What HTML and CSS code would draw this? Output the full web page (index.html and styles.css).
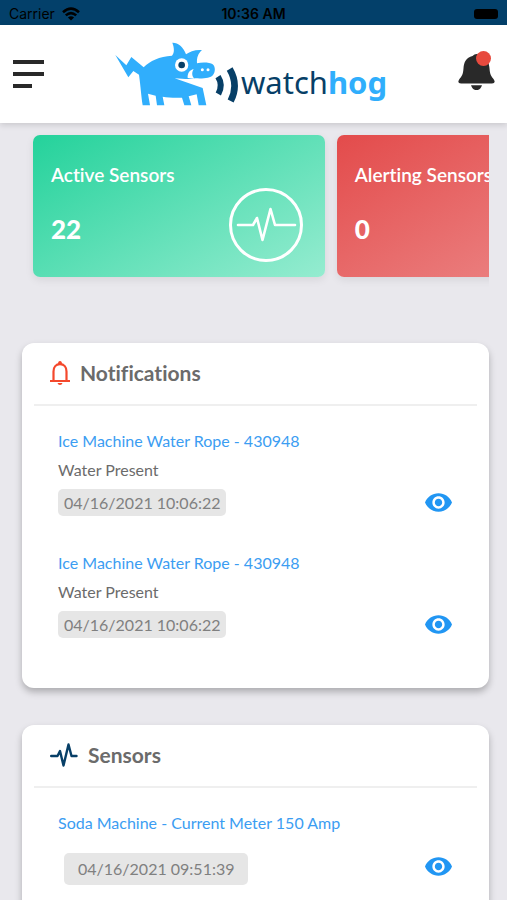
FILE: index.html
```html
<!DOCTYPE html>
<html lang="en">
<head>
<meta charset="utf-8">
<meta name="viewport" content="width=device-width, initial-scale=1">
<title>watchhog</title>
<link rel="stylesheet" href="styles.css">
</head>
<body>
<svg class="defs" aria-hidden="true">
  <symbol id="eye" viewBox="1 4.5 22 15"><path d="M12 4.500C7 4.500 2.730 7.610 1 12c1.730 4.390 6 7.500 11 7.500s9.270-3.110 11-7.500c-1.730-4.390-6-7.500-11-7.500zM12 17c-2.760 0-5-2.240-5-5s2.240-5 5-5 5 2.240 5 5-2.240 5-5 5zm0-8c-1.660 0-3 1.340-3 3s1.340 3 3 3 3-1.340 3-3-1.340-3-3-3z"/></symbol>
</svg>
<div class="status">
  <span class="carrier">Carrier
    <svg width="18" height="14" viewBox="0 0 18 14" aria-hidden="true"><g fill="none" stroke="#000" stroke-width="2.600"><path d="M1 5.200Q9-2 17 5.200"/><path d="M3.800 8.400Q9 3.800 14.200 8.400"/></g><path d="M5.900 10.400Q9 7.900 12.100 10.400L9 13.600Z"/></svg>
  </span>
  <span class="time">10:36 AM</span>
  <span class="battery"></span>
</div>
<header class="topbar">
  <button class="icon-btn" aria-label="Menu">
    <svg width="31" height="30" viewBox="0 0 31 30"><path fill="#292929" d="M0 1h31v4H0zM0 13h31v4H0zM0 25h19v4H0z"/></svg>
  </button>
  <a class="logo" href="#" aria-label="watchhog">
    <svg width="124" height="64" viewBox="19 20 372 192" aria-hidden="true">
      <path fill="#30aefc" d="M20 59L53 90L68 65L105 96C124 76 152 64 190 61C198 52 197 38 191 22C207 21 224 34 232 57C243 49 260 42 280 44C269 54 264 66 265 84C280 80 304 81 312 87C321 94 320 111 313 119C305 129 284 130 260 129C245 133 226 131 198 129L282 158L293 210H270L264 177L240 183L248 210H227L220 187C198 188 178 187 162 184L167 210H145L141 181L118 175L124 210H102C98 184 96 155 91 118L74 107L59 126Z"/>
      <path fill="#fff" d="M237 128C236 114 243 104 255 101C249 111 249 122 257 130Z"/>
      <circle cx="219" cy="89" r="20" fill="#fff"/><circle cx="219" cy="89" r="10" fill="#073f67"/>
      <circle cx="281" cy="103" r="4.500" fill="#fff"/><circle cx="298" cy="103" r="4.500" fill="#fff"/>
      <g fill="none" stroke="#073f67"><path stroke-width="18" d="M328 124Q344 149 329 176"/><path stroke-width="20" d="M363 101Q391 149 366 197"/></g>
    </svg>
    <span class="wordmark">watch<b>hog</b></span>
  </a>
  <button class="icon-btn alerts" aria-label="Alerts">
    <svg width="37" height="36" viewBox="0 0 37 36"><path fill="#292929" d="M14.500 2Q18.500-2 22.500 2C29 4 31 8 31.500 15C32 22 33 23 36 27Q38 31 34 31H3Q-1 31 1 27C4 23 5 22 5.500 15C6 8 8 4 14.500 2ZM13 33H24Q22.500 38 18.500 38T13 33Z" transform="scale(1 .95)"/></svg>
    <span class="dot"></span>
  </button>
</header>
<main>
  <section class="tiles" aria-label="Summary">
    <article class="tile green">
      <h2>Active Sensors</h2>
      <strong>22</strong>
      <svg class="pulse" width="74" height="74" viewBox="0 0 74 74" aria-hidden="true"><g fill="none" stroke="#fff" stroke-width="3" stroke-linecap="round" stroke-linejoin="round"><circle cx="37" cy="37" r="35.500"/><path stroke-width="2.600" d="M9 37H24L28 30L33.500 52L41.500 21L46 37H66"/></g></svg>
    </article>
    <article class="tile red">
      <h2>Alerting Sensors</h2>
      <strong>0</strong>
    </article>
  </section>
  <section class="panel">
    <h2 class="panel-head">
      <svg width="20" height="24" viewBox="0 0 20 24" aria-hidden="true"><path fill="none" stroke="#f4482c" stroke-width="2.200" d="M0 20H20M3.500 20V10.500C3.500 6 6 3.200 10 3.200S16.500 6 16.500 10.500V20"/><path fill="#f4482c" d="M8 3Q8 0 10 0T12 3ZM7.500 22H12.500Q12 24 10 24T7.500 22Z"/></svg>
      Notifications
    </h2>
    <ul>
      <li>
        <a href="#">Ice Machine Water Rope - 430948</a>
        <p>Water Present</p>
        <div class="meta"><time>04/16/2021 10:06:22</time><button class="icon-btn" aria-label="View"><svg width="27" height="19"><use href="#eye"/></svg></button></div>
      </li>
      <li>
        <a href="#">Ice Machine Water Rope - 430948</a>
        <p>Water Present</p>
        <div class="meta"><time>04/16/2021 10:06:22</time><button class="icon-btn" aria-label="View"><svg width="27" height="19"><use href="#eye"/></svg></button></div>
      </li>
    </ul>
  </section>
  <section class="panel sensors">
    <h2 class="panel-head">
      <svg width="28" height="24" viewBox="0 0 28 24" aria-hidden="true"><path fill="none" stroke="#073f67" stroke-width="2.400" stroke-linecap="round" stroke-linejoin="round" d="M1.200 13H7.500L10 8L13.500 22.500L18.500 1.500L21.500 13H26.500"/></svg>
      Sensors
    </h2>
    <ul>
      <li>
        <a href="#">Soda Machine - Current Meter 150 Amp</a>
        <div class="meta"><time>04/16/2021 09:51:39</time><button class="icon-btn" aria-label="View"><svg width="27" height="19"><use href="#eye"/></svg></button></div>
      </li>
    </ul>
  </section>
</main>
</body>
</html>
```
FILE: styles.css
```css
* { box-sizing: border-box; margin: 0; padding: 0; }
body {
  display: flex;
  flex-direction: column;
  height: 100vh;
  background: #e9e8ed;
  color: #6b6b6b;
  font-family: Lato, "Open Sans", sans-serif;
  font-size: 16px;
  font-variant-ligatures: none;
}
a { text-decoration: none; }
ul { list-style: none; }
svg { display: block; flex: none; }
.defs { position: absolute; width: 0; height: 0; }
.icon-btn { border: 0; background: none; cursor: pointer; }

.status {
  display: grid;
  grid-template-columns: 1fr auto 1fr;
  align-items: center;
  flex: none;
  height: 25px;
  padding: 2px 9px 0;
  background: #03406a;
  color: #000;
  font: 14px/20px Inter, sans-serif;
}
.carrier { display: flex; align-items: center; gap: 7px; }
.time { font-weight: 600; }
.battery { justify-self: end; width: 24px; height: 10px; border-radius: 3px; background: #000; }

.topbar {
  display: flex;
  align-items: center;
  flex: none;
  height: 98px;
  padding: 0 12px 0 13px;
  background: #fff;
  box-shadow: 0 2px 6px rgba(0, 0, 0, .14);
  position: relative;
}
.logo { display: flex; flex: 1; justify-content: center; align-items: center; gap: 2px; }
.wordmark { padding-top: 16px; color: #073f67; font: 31px/40px "Noto Sans", sans-serif; }
.wordmark b { color: #30aefc; font-weight: 700; }
.alerts { position: relative; padding-bottom: 4px; }
.dot {
  position: absolute;
  top: -3px;
  right: 4px;
  width: 15px;
  height: 15px;
  border-radius: 50%;
  background: #e74a3e;
}

main { flex: 1; min-height: 0; padding: 0 18px 0 22px; overflow: hidden auto; scrollbar-width: none; }
.tiles {
  display: flex;
  gap: 12px;
  height: 220px;
  padding: 12px 0 66px 11px;
  overflow: hidden;
}
.tile {
  position: relative;
  flex: none;
  width: 64%;
  padding: 28px 18px;
  border-radius: 7px;
  box-shadow: 0 3px 8px rgba(0, 0, 0, .08);
  color: #fff;
}
.green { background: linear-gradient(150deg, #24d29b, #95ecd0); }
.red { background: linear-gradient(150deg, #e34b4b, #ed8e8e); }
.tile h2 { font-size: 19px; font-weight: 600; line-height: 24px; white-space: nowrap; }
.tile strong { display: block; margin-top: 26px; font-size: 26px; font-weight: 900; line-height: 32px; }
.pulse { position: absolute; right: 22px; bottom: 15px; }

.panel {
  min-height: 345px;
  margin-bottom: 37px;
  padding: 0 12px;
  border-radius: 12px;
  background: #fff;
  box-shadow: 0 4px 7px rgba(0, 0, 0, .26);
}
.panel-head {
  display: flex;
  align-items: center;
  gap: 10px;
  height: 63px;
  padding: 0 16px 2px;
  border-bottom: 2px solid #efefef;
  font-size: 21px;
  font-weight: 700;
}
.panel li { padding: 22px 25px 12px 24px; }
.panel a { display: block; color: #3b9df2; line-height: 26px; }
.panel p { margin-top: 3px; line-height: 26px; }
.meta { display: flex; align-items: center; justify-content: space-between; margin-top: 6px; }
.meta use { fill: #2196f3; }
time { padding: 0 6px; border-radius: 5px; background: #e6e6e6; color: #808080; line-height: 27px; }
.sensors .meta { align-items: flex-start; margin-top: 17px; padding-left: 6px; }
.sensors .icon-btn { padding-top: 4px; }
.sensors time { padding: 2px 14px; line-height: 28px; }
```
